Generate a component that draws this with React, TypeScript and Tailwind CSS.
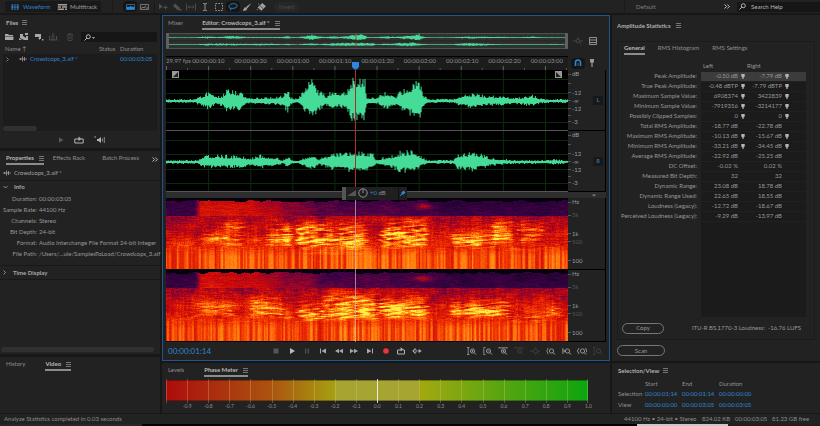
import { Fragment, type ReactNode } from "react";

type Point = [number, number];
type Band = { x: Point; y: Point; gain: number; slope: number; period: number };

const PLOT_W = 401;
const SPEC_H = 72;
const WAVE_H = 61;

const STATS = [
  { label: "Peak Amplitude:", left: "-0.50 dB", right: "-7.79 dB", marker: true },
  { label: "True Peak Amplitude:", left: "-0.48 dBTP", right: "-7.79 dBTP", marker: true },
  { label: "Maximum Sample Value:", left: "6908374", right: "3422839", marker: true },
  { label: "Minimum Sample Value:", left: "-7919356", right: "-3214177", marker: true },
  { label: "Possibly Clipped Samples:", left: "0", right: "0", marker: true },
  { label: "Total RMS Amplitude:", left: "-18.77 dB", right: "-22.78 dB" },
  { label: "Maximum RMS Amplitude:", left: "-10.13 dB", right: "-15.67 dB", marker: true },
  { label: "Minimum RMS Amplitude:", left: "-33.21 dB", right: "-34.45 dB", marker: true },
  { label: "Average RMS Amplitude:", left: "-22.92 dB", right: "-25.25 dB" },
  { label: "DC Offset:", left: "-0.02 %", right: "0.02 %" },
  { label: "Measured Bit Depth:", left: "32", right: "32" },
  { label: "Dynamic Range:", left: "23.08 dB", right: "18.78 dB" },
  { label: "Dynamic Range Used:", left: "22.65 dB", right: "18.55 dB" },
  { label: "Loudness (Legacy):", left: "-12.72 dB", right: "-18.67 dB" },
  { label: "Perceived Loudness (Legacy):", left: "-9.29 dB", right: "-13.97 dB" },
];

const PROPERTIES = [
  ["Duration:", "00:00:03:05"],
  ["Sample Rate:", "44100 Hz"],
  ["Channels:", "Stereo"],
  ["Bit Depth:", "24-bit"],
  ["Format:", "Audio Interchange File Format 24-bit Integer"],
  ["File Path:", "/Users/...ule/SamplesToLoad/Crowdcops_3.aif"],
];

const RULER = [
  "00:00:00:10", "00:00:00:20", "00:00:01:00", "00:00:01:10", "00:00:01:20",
  "00:00:02:00", "00:00:02:10", "00:00:02:20", "00:00:03:00",
];

const ENV_LEFT: Point[] = [
  [0, 2], [28, 2], [34, 5], [42, 9], [49, 4], [56, 6], [61, 12], [74, 9], [81, 3], [107, 4], [115, 5],
  [121, 12], [124, 4], [131, 2], [136, 9], [146, 23], [152, 10], [160, 5], [166, 12], [172, 6], [180, 11],
  [186, 24], [198, 21], [200, 4], [211, 3], [214, 8], [221, 9], [229, 5], [237, 13], [246, 16], [252, 26],
  [254, 14], [257, 6], [261, 2], [286, 2], [294, 6], [306, 8], [321, 5], [337, 5], [347, 3], [366, 6],
  [372, 3], [381, 2], [401, 2],
];

const ENV_RIGHT: Point[] = [
  [0, 2], [31, 2], [36, 6], [50, 7], [72, 6], [84, 4], [94, 7], [111, 4], [116, 2], [121, 6], [126, 2],
  [131, 1], [136, 4], [146, 8], [152, 3], [167, 9], [184, 11], [194, 11], [206, 8], [209, 2], [217, 5],
  [224, 6], [234, 11], [246, 12], [256, 4], [260, 2], [286, 2], [291, 8], [306, 10], [316, 7], [324, 4],
  [347, 2], [380, 2], [387, 3], [401, 1],
];

const BANDS_LEFT: Band[] = [
  { x: [56, 80], y: [18, 36], gain: 0.22, slope: 0, period: 4 },
  { x: [30, 62], y: [30, 46], gain: 0.2, slope: 0.06, period: 4 },
  { x: [56, 79], y: [32, 49], gain: 0.26, slope: 0, period: 5 },
  { x: [76, 106], y: [36, 45], gain: 0.14, slope: 0, period: 4 },
  { x: [100, 118], y: [22, 50], gain: 0.2, slope: 0, period: 5 },
  { x: [115, 127], y: [22, 50], gain: 0.28, slope: 0, period: 5 },
  { x: [130, 157], y: [20, 50], gain: 0.36, slope: 0.2, period: 5 },
  { x: [154, 171], y: [20, 51], gain: 0.26, slope: 0, period: 5 },
  { x: [134, 204], y: [45, 57], gain: 0.2, slope: 0, period: 6 },
  { x: [168, 202], y: [22, 50], gain: 0.36, slope: 0.16, period: 5 },
  { x: [211, 224], y: [25, 50], gain: 0.36, slope: -0.3, period: 5 },
  { x: [218, 261], y: [18, 51], gain: 0.34, slope: 0.14, period: 5 },
  { x: [282, 332], y: [30, 51], gain: 0.3, slope: 0.1, period: 4 },
  { x: [323, 348], y: [16, 46], gain: 0.24, slope: 0.05, period: 4 },
  { x: [349, 377], y: [18, 47], gain: 0.22, slope: 0, period: 5 },
  { x: [340, 375], y: [45, 54], gain: 0.18, slope: 0, period: 5 },
];

const BANDS_RIGHT: Band[] = [
  { x: [28, 70], y: [28, 48], gain: 0.22, slope: 0.04, period: 4 },
  { x: [82, 118], y: [22, 49], gain: 0.22, slope: -0.06, period: 5 },
  { x: [116, 128], y: [40, 50], gain: 0.42, slope: 0, period: 9 },
  { x: [130, 157], y: [28, 52], gain: 0.3, slope: 0.16, period: 5 },
  { x: [154, 212], y: [18, 52], gain: 0.26, slope: 0.14, period: 5 },
  { x: [176, 204], y: [28, 50], gain: 0.16, slope: 0.14, period: 5 },
  { x: [211, 262], y: [24, 50], gain: 0.32, slope: 0.12, period: 4 },
  { x: [282, 344], y: [26, 49], gain: 0.3, slope: 0.1, period: 4 },
  { x: [340, 372], y: [38, 53], gain: 0.18, slope: 0, period: 5 },
  { x: [378, 395], y: [32, 48], gain: 0.24, slope: 0.3, period: 5 },
];

const HEAT: [number, number, number, number][] = [
  [0, 0, 0, 0], [0.12, 26, 4, 46], [0.25, 66, 2, 70], [0.38, 138, 4, 48], [0.5, 202, 10, 10],
  [0.62, 238, 46, 0], [0.75, 255, 108, 10], [0.88, 255, 176, 30], [1, 255, 238, 70],
];

const hash = (x: number, y: number) => {
  const s = Math.sin(x * 127.1 + y * 311.7) * 43758.5453;
  return s - Math.floor(s);
};

const noise = (x: number, y: number) => {
  const ix = Math.floor(x);
  const iy = Math.floor(y);
  const fx = x - ix;
  const fy = y - iy;
  const top = hash(ix, iy) * (1 - fx) + hash(ix + 1, iy) * fx;
  const bottom = hash(ix, iy + 1) * (1 - fx) + hash(ix + 1, iy + 1) * fx;
  return top * (1 - fy) + bottom * fy;
};

const clamp = (v: number) => Math.max(0, Math.min(1, v));

const envelopeAt = (points: Point[], x: number) => {
  const i = Math.max(1, points.findIndex((p) => p[0] >= x));
  const [x0, y0] = points[i - 1];
  const [x1, y1] = points[i];
  return y0 + ((y1 - y0) * (x - x0)) / (x1 - x0);
};

const heatColor = (v: number) => {
  const i = Math.max(1, HEAT.findIndex((h) => h[0] >= v));
  const a = HEAT[i - 1];
  const b = HEAT[i];
  const t = (v - a[0]) / (b[0] - a[0]);
  const c = [1, 2, 3].map((k) => Math.round(a[k] + (b[k] - a[k]) * t));
  return `rgb(${c.join(",")})`;
};

const wavePath = (points: Point[], mid: number, scale: number, seed: number) => {
  let d = "";
  for (let x = 0; x < PLOT_W; x++) {
    const e = envelopeAt(points, x) * scale;
    const up = e * (0.55 + 0.55 * hash(x, seed) ** 2);
    const down = e * (0.5 + 0.5 * hash(x, seed + 7) ** 2);
    d += `M${x + 0.5} ${(mid - up).toFixed(1)}V${(mid + down).toFixed(1)}`;
  }
  return d;
};

const energy = (x: number, y: number, bands: Band[], seed: number) => {
  if (y < 1 + noise(x / 6, seed) * 3) return 0.04;
  const grain = hash(x, y + seed) - 0.5;
  const streak = noise(x / 5, y + seed) - 0.5;
  const cloud = noise(x / 11 + seed, y / 7) - 0.5;
  if (y < 18) {
    const hot = clamp((x - 28) / 6) * clamp((170 - x) / 90);
    const warm = clamp((x - 30) / 5) * clamp((290 - x) / 60) * 0.06;
    const spot = Math.exp(-(((x - 256) / 8) ** 2) - ((y - 8) / 3) ** 2) * 0.22;
    return clamp(0.17 + hot * 0.25 + warm + spot + y * 0.003 + grain * 0.05 + streak * 0.08 + cloud * 0.07);
  }
  const low = clamp((y - 46) / 12);
  const column = noise(x / 1.4, seed + Math.floor(y / 24)) - 0.5;
  const voice = envelopeAt(ENV_RIGHT, x) / 12;
  let v = 0.4 + clamp((y - 17) / 26) * 0.16 + low * 0.1 + clamp(voice) * 0.05;
  v += grain * 0.1 * (1 - low * 0.7) + (streak * 0.12 + cloud * 0.14) * (1 - low) + column * (0.08 + low * 0.2);
  for (const b of bands) {
    const fray = (hash(y, b.x[0]) - 0.5) * 6;
    const inX = clamp((x - b.x[0] + fray) / 5) * clamp((b.x[1] - x + fray) / 5);
    const inY = clamp((y - b.y[0]) / 12) * clamp((b.y[1] - y) / 6);
    if (inX * inY > 0) {
      const ripple = Math.sin((2 * Math.PI * (y + b.slope * (x - b.x[0]))) / b.period);
      v += b.gain * inX * inY * (0.75 + 0.36 * ripple + streak * 0.8 + cloud * 0.8);
    }
  }
  return clamp(v);
};

// one path per heat level, made of horizontal runs
const spectrogramPaths = (bands: Band[], seed: number) => {
  const levels = 32;
  const paths: string[] = Array(levels + 1).fill("");
  for (let y = 0; y < SPEC_H; y++) {
    let start = 0;
    let current = -1;
    for (let x = 0; x <= PLOT_W; x++) {
      const level = x < PLOT_W ? Math.round(energy(x, y, bands, seed) * levels) : -1;
      if (level === current) continue;
      if (current >= 0) paths[current] += `M${start} ${y + 0.5}H${x}`;
      start = x;
      current = level;
    }
  }
  return paths.map((d, i) => ({ d, color: heatColor(i / levels) }));
};

const SPEC_LEFT = spectrogramPaths(BANDS_LEFT, 3);
const SPEC_RIGHT = spectrogramPaths(BANDS_RIGHT, 41);

const Icon = ({ w = 10, h = 8, fill = false, className = "", children }: {
  w?: number; h?: number; fill?: boolean; className?: string; children: ReactNode;
}) => (
  <svg
    width={w}
    height={h}
    viewBox={`0 0 ${w} ${h}`}
    fill={fill ? "currentColor" : "none"}
    stroke={fill ? "none" : "currentColor"}
    aria-hidden="true"
    className={`shrink-0 ${className}`}
  >
    {children}
  </svg>
);

const MenuIcon = () => (
  <Icon w={5} h={5} className="text-[#8a8a8a]"><path d="M0 .5h5M0 2.5h5M0 4.5h5" strokeWidth=".8" /></Icon>
);

const ClipIcon = () => (
  <Icon w={8} h={6}><path d="M0 3h8" strokeWidth=".7" /><path d="M1.500 2v2M3.500 .5v5M5.500 1v4" strokeWidth=".8" /></Icon>
);

const Chevrons = () => (
  <Icon w={6} h={5} className="text-[#c0c0c0]"><path d="M.5.5l2 2-2 2M3.300.5l2 2-2 2" /></Icon>
);

const Magnifier = () => (
  <Icon w={7} h={7} className="text-[#b8b8b8]"><circle cx="4.3" cy="2.7" r="2" /><path d="M2.8 4.2L.5 6.5" /></Icon>
);

const Marker = () => (
  <Icon w={4} h={5} fill className="text-[#b4b4b4]"><path d="M.3 0h3.4v2.4L2.6 3.6V5H1.4V3.6L.3 2.4z" /></Icon>
);

const Tab = ({ active = false, menu = false, children }: { active?: boolean; menu?: boolean; children: ReactNode }) => (
  <button
    type="button"
    className={`flex items-center gap-[5px] whitespace-nowrap border-b-2 pb-px ${active ? "border-[#8c8c8c] font-bold text-[#b8b8b8]" : "border-transparent text-[#8e8e8e]"}`}
  >
    {children}
    {menu && <MenuIcon />}
  </button>
);

const Tool = ({ label, active = false, dim = false, children }: {
  label: string; active?: boolean; dim?: boolean; children: ReactNode;
}) => (
  <button
    type="button"
    aria-label={label}
    className={`flex h-[11px] w-[14px] items-center justify-center rounded-sm ${active ? "bg-[#151515] text-[#2f86d0]" : dim ? "text-[#505050]" : "text-[#a0a0a0]"}`}
  >
    {children}
  </button>
);

const TopBar = () => (
  <header className="flex h-[13px] shrink-0 items-center bg-[#222]">
    <div className="ml-[5px] flex h-[11px] items-center bg-[#191919]">
      <button type="button" className="flex w-[52px] items-center gap-1 pl-[6px] text-[#2f86d0]">
        <Icon w={8} h={6}><path d="M0 3h8M1.5.5v5M4 .5v5M6.5.5v5" strokeWidth=".8" /><path d="M.3.3h7.4v5.4H.3z" strokeWidth=".4" /></Icon>
        Waveform
      </button>
      <button type="button" className="flex w-[44px] items-center gap-[3px] border-l border-[#2a2a2a] text-[#a0a0a0]">
        <Icon w={9} h={6} fill><path d="M0 0h9v1.6H0zM0 2.2h3v1.6H0zM4 2.2h5v1.6H4zM0 4.4h6v1.6H0zM7 4.4h2v1.6H7z" /></Icon>
        Multitrack
      </button>
    </div>
    <div className="ml-[11px] flex h-full items-center border-l border-[#191919] pl-[10px]">
      <Tool label="Spectral frequency display" active>
        <Icon w={9} h={6}><path d="M.5.5h8v5h-8z" strokeWidth=".7" /><path d="M.5 3.5l1.500-1 1 .7 1.500-1.500 1.500 1.300 1-.5 1.500 1v2h-8z" fill="currentColor" stroke="none" /></Icon>
      </Tool>
      <Tool label="Spectral pitch display">
        <Icon w={9} h={6} className="text-[#909090]"><path d="M.5.5h8v5h-8z" strokeWidth=".7" /><path d="M1 4.500l2-1.500 1 1 2-2.500M5.500 4h3" strokeWidth=".8" /></Icon>
      </Tool>
    </div>
    <div className="ml-[3px] flex h-full items-center border-l border-[#191919] pl-[1px]">
      <Tool label="Move" dim><Icon><path d="M1 1v5l4-2.5z" fill="currentColor" stroke="none" /><path d="M5.5 4.5h4M7.5 2.5v4" /></Icon></Tool>
      <Tool label="Razor" dim><Icon fill><path d="M3 .5L8 5 6 7.5 1 3zM7 6h2.5v1.5H7z" /></Icon></Tool>
      <Tool label="Slip" dim><Icon><path d="M.5.5v7M9.5.5v7M2 4h6M3.5 2.5L2 4l1.5 1.5M6.5 2.5L8 4 6.5 5.5" strokeWidth=".9" /></Icon></Tool>
      <Tool label="Time selection"><Icon><path d="M3 .6h1.4L5 1l.6-.4H7M3 7.4h1.4L5 7l.6.4H7M5 1v6" strokeWidth=".9" /></Icon></Tool>
      <Tool label="Marquee selection"><Icon><path d="M1.5.5h7v7h-7z" strokeDasharray="1.6 1.2" strokeWidth=".9" /></Icon></Tool>
      <Tool label="Lasso selection" active><Icon><path d="M2.5 5.2C.3 4.6.5 1.8 3.4 1 6.5.2 9.5 1.2 9.2 3 8.9 4.9 5.5 5.8 2.5 5.2zm0 0C1.5 6 3.5 6.2 2.5 7.6" /></Icon></Tool>
      <Tool label="Paintbrush selection"><Icon fill><path d="M9.500 0L4 4l1.300 1.400zM3.600 4.300C1.800 4.200 2.200 6.500.6 7.500c2.200.6 4.500-.2 4.500-1.800z" /></Icon></Tool>
      <Tool label="Spot healing brush"><Icon fill><path d="M6.300 0L9.900 3.200 5.400 7.800 1.600 4.400z" /><path d="M4.300 3l2.700 2.500" stroke="#222" strokeWidth=".7" /><circle cx="1.200" cy="6.500" r=".6" /><circle cx="2.600" cy="1" r=".6" /></Icon></Tool>
    </div>
    <button type="button" className="ml-[6px] h-[10px] rounded-full bg-[#272727] px-[5px] text-[#4c4c4c]">Invert</button>
    <div className="ml-auto flex h-full w-[196px] items-center border-l border-[#191919]">
      <button type="button" className="ml-[11px] text-[#808080]">Default</button>
      <button type="button" aria-label="More workspaces" className="ml-auto mr-[7px]"><Chevrons /></button>
      <label className="flex h-[10px] w-[83px] items-center gap-[5px] bg-[#161616] pl-[2px]">
        <Magnifier />
        <input aria-label="Search Help" placeholder="Search Help" className="w-full bg-transparent outline-none placeholder:text-[#b8b8b8]" />
      </label>
    </div>
  </header>
);

const FilesPanel = () => (
  <section className="flex h-[133px] shrink-0 flex-col bg-[#222]">
    <h2 className="flex h-[15px] items-center gap-[4px] pl-[6px] font-bold text-[#b0b0b0]">Files <MenuIcon /></h2>
    <div className="flex h-[14px] items-center gap-[5px] pl-[4px] pr-[3px]">
      <button type="button" aria-label="Open file"><Icon w={10} fill className="text-[#a8a8a8]"><path d="M1 1h3l1 1h4v1H1zM1 3.5h8.4V7H1z" /></Icon></button>
      <button type="button" aria-label="Import file"><Icon w={10} fill className="text-[#a8a8a8]"><path d="M1 1h3v2l3 2V3h2v4H5L1 5zM0 5l3 2H0zM6 0h3v2H6z" /></Icon></button>
      <button type="button" aria-label="New file"><Icon w={10} fill className="text-[#a8a8a8]"><path d="M1 1h6v5H5V4H1zM4 5h2v2zM8 6h1.4v1.4H8z" /></Icon></button>
      <button type="button" aria-label="Insert into multitrack"><Icon w={10} className="text-[#4c4c4c]"><path d="M.5 3v4h7V3M4 0v4M2.5 3L4 4.5 5.500 3M2 6h4M9 6.500v1" /></Icon></button>
      <button type="button" aria-label="Delete" className="ml-[3px]"><Icon w={6} className="text-[#424242]"><path d="M0 1.500h6M1 2v5.500h4V2M2 .5h2M3 3v3" /></Icon></button>
      <label className="ml-[3px] flex h-[10px] flex-1 items-center gap-px bg-[#161616] pl-[3px]">
        <Magnifier />
        <Icon w={3} h={2} fill className="mt-[2px] text-[#a8a8a8]"><path d="M0 0h3L1.500 2z" /></Icon>
        <input aria-label="Filter files" className="w-full min-w-0 bg-transparent outline-none" />
      </label>
    </div>
    <div className="mx-[3px] flex flex-1 flex-col bg-[#1c1c1c]">
      <table className="w-full table-fixed border-collapse text-left">
        <thead>
          <tr className="h-[10px] bg-[#222] text-[#909090]">
            <th className="pl-[2px] font-normal">Name ↑</th>
            <th className="w-[21px] font-normal">Status</th>
            <th className="w-[37px] font-normal">Duration</th>
          </tr>
        </thead>
        <tbody>
          <tr className="h-[10px] text-[#2f86d0]">
            <td>
              <div className="flex items-center pl-[3px]">
                <Icon w={4} h={5} className="mr-[9px] text-[#909090]"><path d="M.5.5l2 2-2 2" strokeWidth=".8" /></Icon>
                <span className="mr-[3px] text-[#a0a0a0]"><ClipIcon /></span>
                Crowdcops_3.aif *
              </div>
            </td>
            <td />
            <td>00:00:03:05</td>
          </tr>
        </tbody>
      </table>
      <div className="mt-auto h-[5px] w-[34px] rounded-full bg-[#303030]" />
    </div>
    <div className="flex h-[17px] items-center justify-center gap-[10px] pl-[3px] text-[#b4b4b4]">
      <button type="button" aria-label="Play file"><Icon w={6} h={6} fill className="text-[#5a5a5a]"><path d="M1 .5v5L5.500 3z" /></Icon></button>
      <button type="button" aria-label="Loop file"><Icon><path d="M2 3H.8v4h8.400V3H7M2 3h4" /><path d="M4.500.5L7.500 3l-3 2z" fill="currentColor" stroke="none" /></Icon></button>
      <button type="button" aria-label="Auto-play"><Icon w={11}><path d="M3 3h1.500L7 1v6L4.500 5H3z" fill="currentColor" stroke="none" /><path d="M8.500 2.500v3M10.300 1v6" strokeWidth=".7" /><path d="M.5 1h1.500" /></Icon></button>
    </div>
  </section>
);

const PropertiesPanel = () => (
  <section className="flex flex-1 flex-col bg-[#222]">
    <nav className="flex h-[15px] items-center pl-[6px] pr-[2px] pt-[2px]">
      <Tab active menu>Properties</Tab>
      <div className="ml-[9px] flex flex-1 justify-between">
        <Tab>Effects Rack</Tab>
        <Tab>Batch Process</Tab>
      </div>
      <button type="button" aria-label="More panels" className="ml-[13px]"><Chevrons /></button>
    </nav>
    <p className="flex h-[15px] items-center gap-[3px] border-b border-[#181818] pl-[3px] text-[#a4a4a4]"><ClipIcon /> Crowdcops_3.aif *</p>
    <button type="button" className="flex h-[12px] items-center gap-[6px] pl-[3px] font-bold text-[#a8a8a8]">
      <Icon w={5} h={4}><path d="M.5 1l2 2 2-2" strokeWidth=".8" /></Icon> Info
    </button>
    <dl className="grid grid-cols-[36px_1fr] gap-x-[2px] border-b border-[#181818] pb-[6px] pl-px leading-[11px] text-[#989898]">
      {PROPERTIES.map(([label, value]) => (
        <Fragment key={label}>
          <dt className="whitespace-nowrap text-right">{label}</dt>
          <dd className="whitespace-nowrap">{value}</dd>
        </Fragment>
      ))}
    </dl>
    <button type="button" className="flex h-[14px] items-center gap-[6px] border-b border-[#181818] pl-[3px] font-bold text-[#a8a8a8]">
      <Icon w={4} h={5}><path d="M.5.5l2 2-2 2" strokeWidth=".8" /></Icon> Time Display
    </button>
    <div className="mb-[2px] ml-px mr-[6px] mt-auto h-[5px] rounded-full bg-[#303030]" />
  </section>
);

const Waveform = ({ points, seed }: { points: Point[]; seed: number }) => (
  <svg viewBox={`0 0 ${PLOT_W} ${WAVE_H}`} preserveAspectRatio="none" className="h-full min-w-0 flex-1 bg-black" role="img" aria-label="Waveform">
    <path d="M0 9.500H401M0 23.500H401M0 38.500H401M0 52.500H401" stroke="#0a2a0a" />
    <path d="M42.500 0v61M84.500 0v61M126.500 0v61M168.500 0v61M210.500 0v61M252.500 0v61M294.500 0v61M336.500 0v61M378.500 0v61" stroke="#0a2a0a" />
    <path d="M0 31H401" stroke="#45dc98" />
    <path d={wavePath(points, 31, 1, seed)} stroke="#45dc98" />
    <path d="M0 60.500H401" stroke="#555" />
  </svg>
);

const Spectrogram = ({ paths }: { paths: { d: string; color: string }[] }) => (
  <svg viewBox={`0 0 ${PLOT_W} ${SPEC_H}`} preserveAspectRatio="none" shapeRendering="crispEdges" className="h-full min-w-0 flex-1 bg-black" role="img" aria-label="Spectrogram">
    {paths.map(({ d, color }) => d && <path key={color} d={d} stroke={color} />)}
    <path d="M0 71.500H401" stroke="#000" />
  </svg>
);

const ScaleLabel = ({ dim = false, children }: { dim?: boolean; children: ReactNode }) => (
  <span className={`flex h-[8px] items-center gap-px ${dim ? "text-[#555]" : "text-[#9a9a9a]"}`}>
    <i className="h-px w-[3px] bg-[#555]" />{children}
  </span>
);

const WaveScale = ({ channel }: { channel: string }) => (
  <div className="flex w-[38px] border-b border-r border-black">
    <div className="flex flex-1 flex-col">
      <ScaleLabel>dB</ScaleLabel>
      <div className="flex flex-[10] flex-col justify-center"><i className="h-px w-[3px] bg-[#555]" /></div>
      <ScaleLabel>-12</ScaleLabel>
      <ScaleLabel>-∞</ScaleLabel>
      <ScaleLabel>-12</ScaleLabel>
      <div className="flex flex-[5] flex-col justify-center"><i className="h-px w-[3px] bg-[#555]" /></div>
      <ScaleLabel>-3</ScaleLabel>
      <div className="flex-[4]" />
    </div>
    <button type="button" className="mr-[2px] h-[9px] w-[10px] self-center bg-[#181818] text-[5px] font-bold text-[#2f7ab8]">{channel}</button>
  </div>
);

const FreqScale = () => (
  <div className="flex w-[38px] flex-col border-b border-r border-black">
    <ScaleLabel>Hz</ScaleLabel>
    <div className="flex-[5]" />
    <ScaleLabel dim>5k</ScaleLabel>
    <div className="flex-[10]" />
    <ScaleLabel>1k</ScaleLabel>
    <ScaleLabel dim>500</ScaleLabel>
    <div className="flex-[11]" />
    <ScaleLabel>100</ScaleLabel>
    <div className="flex-[4]" />
  </div>
);

const TRANSPORT = [
  { label: "Stop", tone: "text-[#555]", art: <path d="M2.500 1.500h5v5h-5z" /> },
  { label: "Play", tone: "text-[#bbb]", art: <path d="M3 1v6l5-3z" /> },
  { label: "Pause", tone: "text-[#505050]", art: <path d="M3 1.500h1.300v5H3zM5.700 1.500H7v5H5.700z" /> },
  { label: "Go to start", tone: "text-[#a8a8a8]", art: <path d="M2 1.500h1v5H2zM8 1.500v5L3.500 4z" /> },
  { label: "Rewind", tone: "text-[#a8a8a8]", art: <path d="M5 1.700v4.600L1 4zM9 1.700v4.600L5 4z" /> },
  { label: "Fast forward", tone: "text-[#a8a8a8]", art: <path d="M1 1.700v4.600L5 4zM5 1.700v4.600L9 4z" /> },
  { label: "Go to end", tone: "text-[#a8a8a8]", art: <path d="M7 1.500h1v5H7zM2 1.500v5L6.500 4z" /> },
  { label: "Record", tone: "text-[#ee3238]", art: <circle cx="5" cy="4" r="2.800" /> },
  { label: "Loop playback", tone: "text-[#b0b0b0]", art: <><path d="M2 3H1.500v4h7V3H7M2 3h4" fill="none" stroke="currentColor" /><path d="M4.500.3v4L7.500 2.500z" /></> },
  { label: "Skip selection", tone: "text-[#b0b0b0]", art: <><path d="M3.500.7v6.600L.3 4zM6.700 2v4L9.700 4z" /><path d="M3.500 2.200L5.300 4 3.500 5.800M6 4h2" fill="none" stroke="currentColor" strokeWidth=".8" /><path d="M3.300 2.500v3L1.800 4z" fill="#222" /></> },
];

const GLASS = (
  <><circle cx="5.500" cy="4" r="2.100" strokeWidth=".9" /><path d="M7 5.500L9 7.500" /></>
);

const ZOOMS = [
  { label: "Zoom in amplitude", art: <><path d="M0 .5h2.500M0 7.500h2.500M1.200.5v7M4.500 4h2M5.500 3v2" strokeWidth=".8" />{GLASS}</> },
  { label: "Zoom out amplitude", art: <><path d="M2.500.5H.8v7h1.700M4.500 4h2" strokeWidth=".8" />{GLASS}</> },
  { label: "Zoom in time", art: <><path d="M1 .8h8M1 0v1.600M9 0v1.600M4.500 4h2M5.500 3v2" strokeWidth=".8" />{GLASS}</> },
  { label: "Zoom out time", dim: true, art: <><path d="M1 .8h8M1 0v1.600M9 0v1.600M4.500 4h2" strokeWidth=".8" />{GLASS}</> },
  { label: "Zoom out full", dim: true, art: <><path d="M5.500 0v1M5.500 7v1M0 4h2.500M8.500 4h1.500" />{GLASS}</> },
  { label: "Zoom to in point", art: <><path d="M2.500 1Q1 1.500 1.500 3L.5 4l1 1Q1 6.500 2.500 7" strokeWidth=".8" />{GLASS}</> },
  { label: "Zoom to out point", art: <><path d="M.8 1v6M1 4h1.500M2 2.500L3 4 2 5.500" strokeWidth=".8" />{GLASS}</> },
  { label: "Zoom to selection", art: <><path d="M2 1L.4 4 2 7M8.500 1l1.300 3-.6 1.500" strokeWidth=".9" />{GLASS}</> },
  { label: "Reset amplitude zoom", dim: true, art: <><path d="M0 .5h2.500M0 7.500h2.500M1.200.5v7" strokeWidth=".8" />{GLASS}</> },
];

const EditorPanel = () => (
  <section className="flex min-h-0 flex-1 flex-col border border-[#20558c] bg-[#222] px-[3px]">
    <nav className="flex h-[15px] items-end gap-[19px] pb-px pl-[2px]">
      <Tab>Mixer</Tab>
      <Tab active menu>Editor: Crowdcops_3.aif *</Tab>
    </nav>
    <div className="mt-[2px] flex h-[16px] shrink-0">
      <svg viewBox="0 0 401 16" preserveAspectRatio="none" className="h-full min-w-0 flex-1" role="img" aria-label="File overview">
        <rect x=".5" y=".5" width="400" height="15" rx="2" fill="#303030" stroke="#505050" />
        <path d="M3 8h395" stroke="#222" />
        <path d="M3 4.500h395M3 11.500h395" stroke="#2f9a6a" strokeWidth=".7" />
        <path d={wavePath(ENV_LEFT, 4.5, 0.14, 1)} stroke="#45dc98" />
        <path d={wavePath(ENV_RIGHT, 11.5, 0.16, 2)} stroke="#45dc98" />
        <path d="M189.500 1v14" stroke="#8c2020" strokeWidth=".7" />
        <rect x="0" y="0" width="3" height="16" rx="1" fill="#606060" />
        <rect x="398" y="0" width="3" height="16" rx="1" fill="#606060" />
      </svg>
      <div className="flex w-[38px] items-center justify-end gap-[6px] pr-[9px] text-[#909090]">
        <button type="button" aria-label="Zoom navigator"><Icon className="text-[#444]"><circle cx="5" cy="4" r="1.800" /><path d="M5 0v2M0 4h3M7 4h3M6.500 5.500l2 2" /></Icon></button>
        <button type="button" aria-label="List view"><Icon w={8}><path d="M.5.5h7v7h-7zM.5 3h7M.5 5.500h7" /></Icon></button>
      </div>
    </div>
    <div className="mt-[7px] flex h-[14px] shrink-0">
      <div className="relative flex min-w-0 flex-1 border-t border-black bg-[#1c1c1c] text-[#909090]">
        <svg viewBox="0 0 401 13" preserveAspectRatio="none" className="absolute inset-0 h-full w-full" aria-hidden="true">
          <path d="M.5 9v4M42.500 9v4M84.500 9v4M126.500 9v4M168.500 9v4M210.500 9v4M252.500 9v4M294.500 9v4M336.500 9v4M378.500 9v4" stroke="#666" />
          <path d="M21.500 11v2M63.500 11v2M105.500 11v2M147.500 11v2M231.500 11v2M273.500 11v2M315.500 11v2M357.500 11v2M399.500 11v2" stroke="#555" />
        </svg>
        <span className="min-w-0 flex-1 whitespace-nowrap">29.97 fps</span>
        {RULER.map((t) => <span key={t} className="min-w-0 flex-[2] text-center">{t}</span>)}
      </div>
      <div className="flex w-[38px] items-center gap-[4px] pl-[3px]">
        <Tool label="Snapping" active><Icon w={8}><path d="M1.500 7V3.500a2.500 2.500 0 015 0V7" strokeWidth="1.600" /><path d="M4 4v3" strokeWidth=".7" /></Icon></Tool>
        <button type="button" aria-label="Add marker"><Icon w={6} fill className="text-[#999]"><path d="M1 0h4v3L3.600 4v4H2.400V4L1 3z" /></Icon></button>
      </div>
    </div>
    <div className="relative flex min-h-0 flex-1 flex-col">
      <div className="flex min-h-0 flex-[61]"><Waveform points={ENV_LEFT} seed={5} /><WaveScale channel="L" /></div>
      <div className="flex min-h-0 flex-[61]"><Waveform points={ENV_RIGHT} seed={9} /><WaveScale channel="R" /></div>
      <div className="flex h-[6px] shrink-0 items-center justify-end bg-[#2d2d2d] pr-[10px] text-[#888]">
        <Icon w={4} h={3} fill><path d="M0 .5h4L2 2.500z" /></Icon>
      </div>
      <div className="flex min-h-0 flex-[72]"><Spectrogram paths={SPEC_LEFT} /><FreqScale /></div>
      <div className="flex min-h-0 flex-[72]"><Spectrogram paths={SPEC_RIGHT} /><FreqScale /></div>
      {/* playhead and volume HUD float over the plots */}
      <div className="pointer-events-none absolute inset-y-0 left-0 right-[38px]">
        <div className="absolute inset-y-0 left-[47%] flex w-px flex-col">
          <i className="flex-[123] bg-[#b02a2a]" />
          <i className="flex-[150] bg-[#e0b0b0]/70" />
        </div>
        <Icon w={7} h={8} fill className="absolute -top-[8px] left-[47%] -ml-[3px] text-[#2f86e0]"><path d="M0 0h7v5L4.500 7.500h-2L0 5z" /></Icon>
        <Icon w={7} h={7} className="absolute left-[6px] top-[1px]"><path d="M0 0h7v7H0z" fill="#999" stroke="none" /><path d="M1 6h5V1z" fill="#222" stroke="none" /></Icon>
        <Icon w={7} h={7} className="absolute right-[6px] top-[1px]"><path d="M0 0h7v7H0z" fill="#999" stroke="none" /><path d="M1 6h5L1 1z" fill="#222" stroke="none" /></Icon>
      </div>
      <div className="absolute left-[40%] top-[43%] flex h-[13px] w-[65px] items-center bg-[#1f1f1f] text-[#909090]">
        <i className="h-full w-[4px] bg-[#555]" />
        <Icon w={9} h={6} fill className="ml-px text-[#555]"><path d="M0 6h9V0z" /></Icon>
        <Icon className="ml-[2px]" w={10} h={10}><circle cx="5" cy="5" r="4.200" /><path d="M5 1v4" /></Icon>
        <span className="ml-[2px] whitespace-nowrap"><b className="font-normal text-[#2f86d0]">+0</b> dB</span>
        <button type="button" aria-label="Pin HUD" className="ml-auto flex h-full w-[9px] items-center justify-center border-l border-[#111] text-[#2f86d0]">
          <Icon w={6} h={6}><path d="M0 6l2.500-2.500" /><path d="M3.500.5l2 2-2.500 2.500-2-2z" fill="currentColor" stroke="none" /></Icon>
        </button>
      </div>
    </div>
    <footer className="flex h-[18px] shrink-0 items-center">
      <time className="w-[102px] pl-[2px] text-[8px] text-[#2f86d0]">00:00:01:14</time>
      <div className="flex w-[157px]">
        {TRANSPORT.map(({ label, tone, art }) => (
          <button key={label} type="button" aria-label={label} className={`flex flex-1 justify-center ${tone}`}><Icon fill>{art}</Icon></button>
        ))}
      </div>
      <div className="ml-auto flex w-[142px]">
        {ZOOMS.map(({ label, dim, art }) => (
          <button key={label} type="button" aria-label={label} className={`flex flex-1 justify-center ${dim ? "text-[#404040]" : "text-[#a0a0a0]"}`}><Icon>{art}</Icon></button>
        ))}
      </div>
    </footer>
  </section>
);

const PhasePanel = () => (
  <section className="h-[50px] shrink-0 bg-[#222] pl-[4px]">
    <nav className="flex h-[14px] items-end gap-[20px] pl-[2px]">
      <Tab>Levels</Tab>
      <Tab active menu>Phase Meter</Tab>
    </nav>
    <div className="mt-[2px] pr-[22px]">
      <svg viewBox="0 0 422 24" preserveAspectRatio="none" className="h-[24px] w-full" role="img" aria-label="Phase correlation">
        <defs>
          <linearGradient id="phase">
            <stop offset="0" stopColor="#ac0c0c" />
            <stop offset=".25" stopColor="#ab5410" />
            <stop offset=".4" stopColor="#a5a010" />
            <stop offset=".6" stopColor="#a5a810" />
            <stop offset=".8" stopColor="#55a510" />
            <stop offset="1" stopColor="#0ca510" />
          </linearGradient>
        </defs>
        <rect y="1" width="422" height="21" fill="url(#phase)" />
        <rect x="169" y="1" width="84" height="21" fill="#a8a53a" opacity=".8" />
        <path d="M0 1.500h422M0 21.500h422" stroke="#000" opacity=".3" />
        {Array.from({ length: 21 }, (_, i) => (
          <path key={i} d={`M${Math.min(421.5, Math.round(i * 21.1) + 0.5)} 0v24`} stroke={i === 10 ? "#fff" : "#e0d090"} opacity={i === 10 ? 0.8 : 0.28} />
        ))}
      </svg>
    </div>
    <div className="flex pr-[11px] text-[5px] leading-[7px] text-[#8c8c8c]">
      <span className="min-w-0 flex-1" />
      {Array.from({ length: 20 }, (_, i) => (
        <span key={i} className="min-w-0 flex-[2] text-center">{((i - 9) / 10).toFixed(1)}</span>
      ))}
    </div>
  </section>
);

const StatsPanel = () => (
  <section className="flex min-h-0 flex-1 flex-col bg-[#222] px-[5px] pb-[5px]">
    <h2 className="flex h-[21px] items-center gap-[5px] whitespace-nowrap font-bold text-[#b0b0b0]">Amplitude Statistics <MenuIcon /></h2>
    <div className="mb-[5px] mt-[5px] flex flex-1 flex-col border border-[#1b1b1b] pl-[6px] pr-[8px]">
      <nav className="flex h-[13px] items-end gap-[13px]">
        <Tab active>General</Tab>
        <Tab>RMS Histogram</Tab>
        <Tab>RMS Settings</Tab>
      </nav>
      <table className="mt-[6px] w-full table-fixed border-collapse text-right text-[#989898]">
        <thead>
          <tr className="h-[10px] text-left">
            <th className="w-[77px]" />
            <th className="pl-[2px] font-normal">Left</th>
            <th className="pl-[2px] font-normal">Right</th>
            <td className="w-[17px]" />
          </tr>
        </thead>
        <tbody>
          {STATS.map((row, i) => (
            <tr key={row.label} className="h-[10px]">
              <th className="whitespace-nowrap pr-[4px] font-normal"><span className="float-right">{row.label}</span></th>
              {[row.left, row.right].map((value, side) => (
                <td key={side} className={`border-y border-[#202020] ${i === 0 ? "bg-[#3c3c3c]" : "bg-[#1b1b1b]"}`}>
                  <div className="flex items-center justify-end gap-[3px] whitespace-nowrap leading-[8px]">
                    {value}
                    <span className="w-[4px]">{row.marker && <Marker />}</span>
                  </div>
                </td>
              ))}
              <td className={`border-y border-[#202020] ${i === 0 ? "bg-[#3c3c3c]" : "bg-[#1b1b1b]"}`} />
            </tr>
          ))}
        </tbody>
      </table>
      <div className="ml-[77px] flex-1 bg-[#1b1b1b]" />
      <div className="flex h-[22px] items-center justify-between text-[#989898]">
        <button type="button" className="-ml-[2px] h-[11px] w-[42px] rounded-full border border-[#777]">Copy</button>
        <p className="pr-[5px]">ITU-R BS.1770-3 Loudness:&nbsp; -16.76 LUFS</p>
      </div>
    </div>
    <button type="button" className="h-[11px] w-[48px] rounded-full border border-[#777] text-[#989898]">Scan</button>
  </section>
);

const SelectionPanel = () => (
  <section className="h-[50px] shrink-0 bg-[#222] pl-[6px]">
    <h2 className="flex h-[15px] items-center gap-[4px] font-bold text-[#b0b0b0]">Selection/View <MenuIcon /></h2>
    <table className="table-fixed text-left text-[#909090]">
      <thead>
        <tr className="h-[11px]">
          <th className="w-[27px]" />
          <th className="w-[37px] font-normal">Start</th>
          <th className="w-[37px] font-normal">End</th>
          <th className="w-[37px] font-normal">Duration</th>
        </tr>
      </thead>
      <tbody className="text-[#2f86d0]">
        <tr className="h-[10px]"><th className="font-normal text-[#909090]">Selection</th><td>00:00:01:14</td><td>00:00:01:14</td><td>00:00:00:00</td></tr>
        <tr className="h-[11px]"><th className="font-normal text-[#909090]">View</th><td>00:00:00:00</td><td>00:00:03:05</td><td>00:00:03:05</td></tr>
      </tbody>
    </table>
  </section>
);

export default function App() {
  return (
    <div className="flex h-screen min-h-[400px] min-w-[700px] flex-col bg-[#171717] font-['Lato','Noto_Sans',sans-serif] text-[6px] leading-[8px] text-[#a0a0a0]">
      <TopBar />
      <main className="mt-[2px] flex min-h-0 flex-1 gap-[2px]">
        <aside className="flex w-[160px] shrink-0 flex-col gap-[3px]">
          <FilesPanel />
          <PropertiesPanel />
          <section className="h-[56px] shrink-0 bg-[#222]">
            <nav className="flex h-[14px] items-end gap-[20px] pl-[6px]">
              <Tab>History</Tab>
              <Tab active menu>Video</Tab>
            </nav>
          </section>
        </aside>
        <div className="flex min-w-0 flex-1 flex-col gap-[2px]">
          <EditorPanel />
          <PhasePanel />
        </div>
        <aside className="flex w-[208px] shrink-0 flex-col gap-[2px]">
          <StatsPanel />
          <SelectionPanel />
        </aside>
      </main>
      <footer className="mt-px flex h-[10px] shrink-0 items-center whitespace-nowrap bg-[#222] pl-[4px] text-[#8c8c8c]">
        <span className="mr-auto">Analyze Statistics completed in 0.03 seconds</span>
        <span className="w-[78px]">44100 Hz • 24-bit • Stereo</span>
        <span className="w-[33px]">824.02 KB</span>
        <span className="w-[37px]">00:00:03:05</span>
        <span className="w-[48px]">81.23 GB free</span>
      </footer>
      <div className="flex h-[2px] shrink-0 bg-black">
        <i className="mr-auto w-[142px] bg-[#262626]" />
        <i className="w-[91px] bg-[#c8c8c8]" />
        <i className="w-[92px] bg-[#2a1a18]" />
      </div>
    </div>
  );
}
